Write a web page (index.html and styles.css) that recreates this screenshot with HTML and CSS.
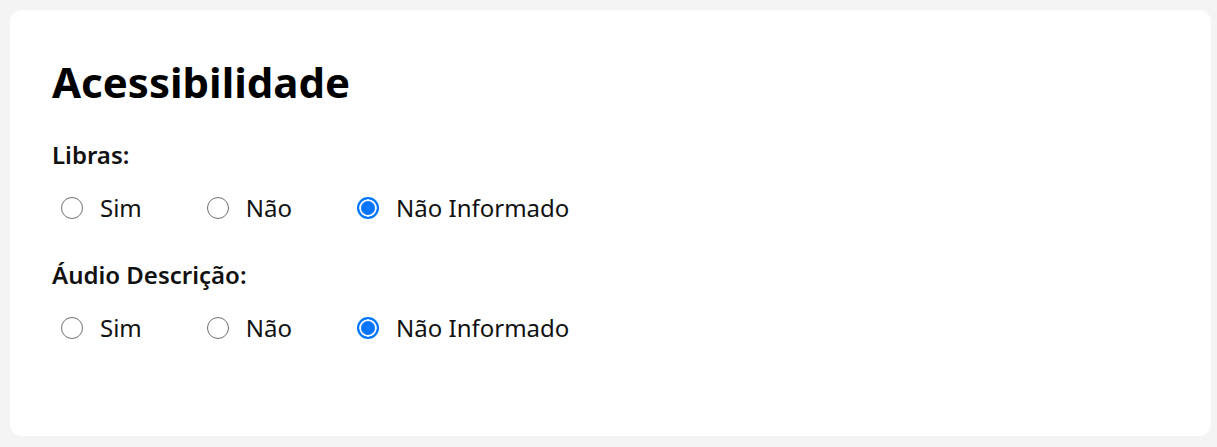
FILE: index.html
```html
<!DOCTYPE html>
<html lang="pt-BR">
<head>
<meta charset="utf-8">
<title>Acessibilidade</title>
<link rel="stylesheet" href="styles.css">
</head>
<body>
<section class="card">
  <h1 class="title">Acessibilidade</h1>
  <div class="group">
    <div class="group-label">Libras:</div>
    <div class="options">
      <label class="option"><input type="radio" name="libras" value="sim"><span>Sim</span></label>
      <label class="option"><input type="radio" name="libras" value="nao"><span>Não</span></label>
      <label class="option"><input type="radio" name="libras" value="ni" checked><span>Não Informado</span></label>
    </div>
  </div>
  <div class="group">
    <div class="group-label">Áudio Descrição:</div>
    <div class="options">
      <label class="option"><input type="radio" name="audio" value="sim"><span>Sim</span></label>
      <label class="option"><input type="radio" name="audio" value="nao"><span>Não</span></label>
      <label class="option"><input type="radio" name="audio" value="ni" checked><span>Não Informado</span></label>
    </div>
  </div>
</section>
</body>
</html>
```
FILE: styles.css
```css
html, body {
  margin: 0;
  padding: 0;
}
body {
  background: #f4f4f4;
  padding: 10px 6px 11px 10px;
  font-family: "Noto Sans", "Open Sans", "Liberation Sans", sans-serif;
  color: #000;
}
.card {
  background: #ffffff;
  border-radius: 12px;
  height: 426px;
  box-sizing: border-box;
  padding: 48px 42px 0 42px;
}
.title {
  margin: 0;
  font-size: 42px;
  line-height: 48px;
  font-weight: 700;
  color: #000;
}
.group {
  margin-top: 31px;
}
.group-label {
  font-size: 24px;
  line-height: 36px;
  font-weight: 600;
  color: #111;
}
.options {
  display: flex;
  gap: 65px;
  margin-top: 17px;
  padding-left: 9px;
}
.option {
  display: flex;
  align-items: center;
  gap: 17px;
  font-size: 24px;
  line-height: 36px;
  color: #111;
}
.option input {
  appearance: none;
  -webkit-appearance: none;
  margin: 0;
  width: 22px;
  height: 22px;
  box-sizing: border-box;
  border-radius: 50%;
  border: 1.6px solid #6f6f6f;
  background: #fff;
}
.option input:checked {
  border: 2px solid #0075ff;
  background: #0075ff;
  box-shadow: inset 0 0 0 2px #fff;
}
```
